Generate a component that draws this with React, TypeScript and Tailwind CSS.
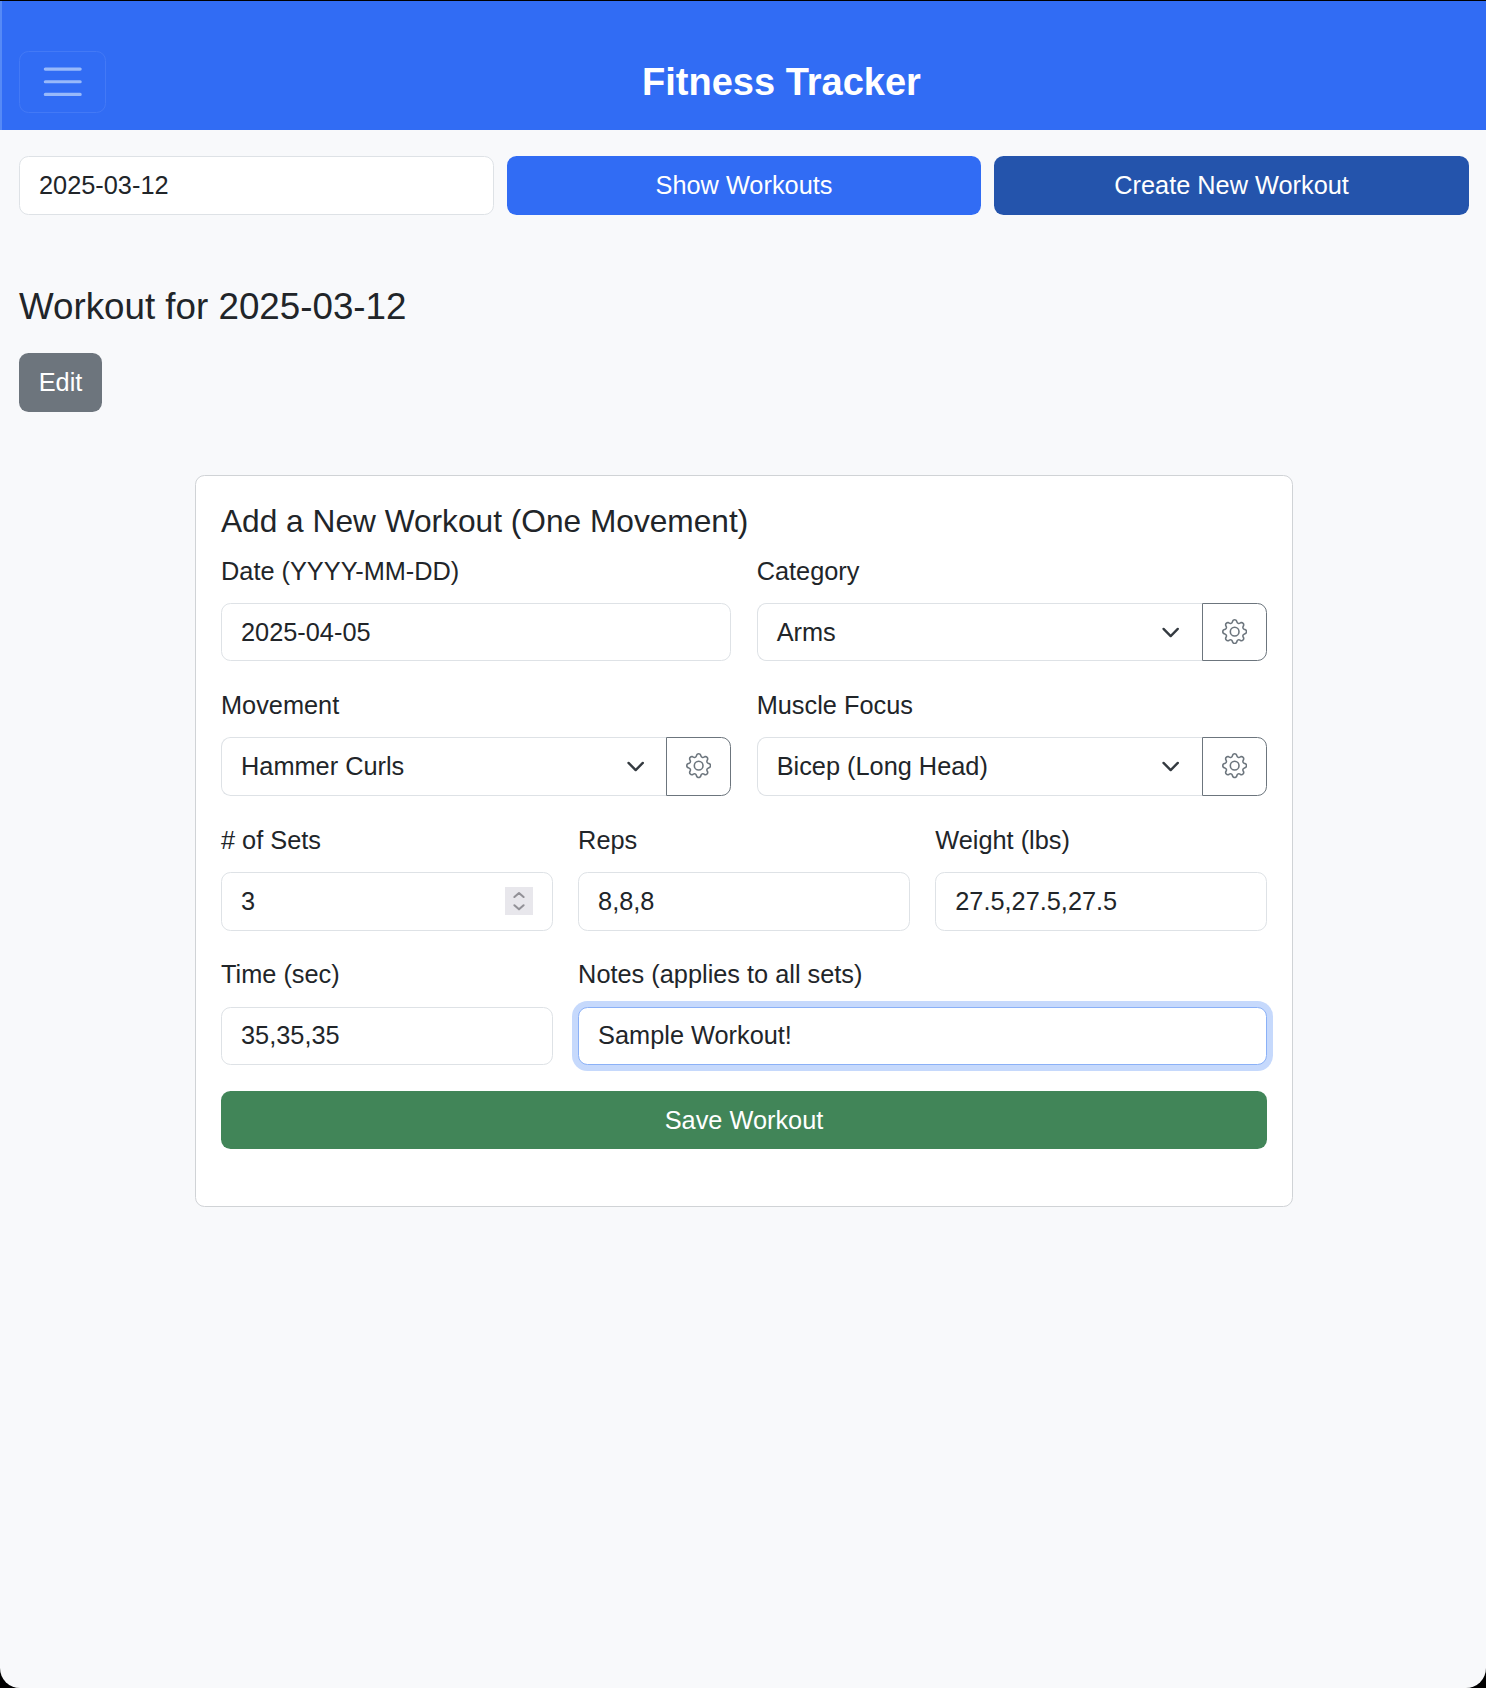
import type { ReactNode } from "react";
import { BsGear } from "react-icons/bs";

type FieldProps = { label: string; className?: string; raised?: boolean; children: ReactNode };

function Field({ label, className = "", raised = false, children }: FieldProps) {
  return (
    <div className={`min-w-0 ${className}`}>
      <label
        className={
          raised
            ? "mb-[13.37px] block h-[37.3px] leading-[37.3px]"
            : "mb-[12.67px] block h-[38px] leading-[38px]"
        }
      >
        {label}
      </label>
      {children}
    </div>
  );
}

type TextBoxProps = { value: string; focused?: boolean; raised?: boolean };

function TextBox({ value, focused = false, raised = false }: TextBoxProps) {
  const border = focused ? "border-[#8bb1f7] shadow-[0_0_0_6px_#c6d9fc]" : "border-[#dee2e6]";
  const bottom = raised ? "pb-[1.4px]" : "pb-[0.7px]";
  return (
    <div className={`flex h-[58.67px] w-full items-center rounded-[9.5px] border bg-white px-[19px] ${border} ${bottom}`}>
      {value}
    </div>
  );
}

function NumberBox({ value }: { value: string }) {
  return (
    <div className="flex h-[58.67px] w-full items-center justify-between rounded-[9.5px] border border-[#dee2e6] bg-white px-[19px]">
      <span className="pb-[0.7px]">{value}</span>
      <span className="flex h-7 w-7 items-center justify-center bg-[#e8e7ec]">
        <svg width="28" height="28" viewBox="0 0 28 28" fill="none" stroke="#929197" strokeWidth="2.1" strokeLinecap="round" strokeLinejoin="round">
          <path d="M9.4 10 14 6 18.6 10" />
          <path d="M9.4 18.3 14 22.3 18.6 18.3" />
        </svg>
      </span>
    </div>
  );
}

function SelectBox({ value }: { value: string }) {
  return (
    <div className="flex">
      <div className="flex h-[58.67px] min-w-0 flex-1 items-center justify-between rounded-l-[9.5px] border border-r-0 border-[#dee2e6] bg-white pr-[18px] pl-[19px]">
        <span className="pb-[0.7px]">{value}</span>
        <svg className="mt-[0.5px] h-[19px] w-[25.33px]" viewBox="0 0 16 16" fill="none">
          <path d="m2 5 6 6 6-6" stroke="#343a40" strokeWidth="2" strokeLinecap="round" strokeLinejoin="round" />
        </svg>
      </div>
      <button className="flex h-[58.67px] w-[65.33px] items-center justify-center rounded-r-[9.5px] border border-[#6c757d] pb-px text-[#6c757d]">
        <BsGear className="h-[25.33px] w-[25.33px]" />
      </button>
    </div>
  );
}

export default function App() {
  return (
    <div className="h-[1688px] w-full bg-black font-['Liberation_Sans',Arial,sans-serif] text-[25.33px] leading-[38px] text-[#212529]">
      <div className="h-full overflow-hidden rounded-b-[20px] border-t border-black bg-[#f8f9fb]">
        <header className="flex h-[129px] items-start border-l-2 border-[#568af6] bg-[#316cf4] pt-[50px] pl-[17px]">
          <button className="flex h-[62px] w-[87px] items-center justify-center rounded-[9.5px] border border-[#4379f6]">
            <svg className="h-[47.5px] w-[47.5px]" viewBox="0 0 30 30">
              <path d="M4 7h22M4 15h22M4 23h22" stroke="#98b9fa" strokeWidth="2" strokeLinecap="round" />
            </svg>
          </button>
          <h1 className="flex-1 pt-[3px] pr-[29px] text-center text-[38px] leading-[57px] font-bold text-white">
            Fitness Tracker
          </h1>
        </header>

        <div className="mt-[26px] grid grid-cols-3 gap-[12.67px] pr-[17px] pl-[19px]">
          <div className="flex h-[59px] items-center rounded-[9.5px] border border-[#dee2e6] bg-white px-[19px] pb-[2px]">2025-03-12</div>
          <button className="h-[59px] rounded-[9.5px] bg-[#316cf4] pb-[2px] text-white">Show Workouts</button>
          <button className="h-[59px] rounded-[9.5px] bg-[#2454ac] pb-[2px] text-white">Create New Workout</button>
        </div>

        <section className="mt-[70px] pl-[19px]">
          <h2 className="text-[36.75px] leading-[44px]">Workout for 2025-03-12</h2>
          <button className="mt-[24px] h-[59px] w-[83px] rounded-[9.5px] bg-[#6d757d] pb-[2px] text-white">Edit</button>
        </section>

        <section className="mt-[63px] ml-[195px] h-[732px] w-[1098px] rounded-[9.5px] border border-[#d0d3d6] bg-white px-[25px] pt-[26.33px]">
          <h3 className="mb-[11.67px] text-[31.67px] leading-[38px]">Add a New Workout (One Movement)</h3>
          <div className="grid grid-cols-6 gap-[25.33px]">
            <Field label="Date (YYYY-MM-DD)" className="col-span-3">
              <TextBox value="2025-04-05" />
            </Field>
            <Field label="Category" className="col-span-3">
              <SelectBox value="Arms" />
            </Field>
            <Field label="Movement" className="col-span-3" raised>
              <SelectBox value="Hammer Curls" />
            </Field>
            <Field label="Muscle Focus" className="col-span-3" raised>
              <SelectBox value="Bicep (Long Head)" />
            </Field>
            <Field label="# of Sets" className="col-span-2">
              <NumberBox value="3" />
            </Field>
            <Field label="Reps" className="col-span-2">
              <TextBox value="8,8,8" />
            </Field>
            <Field label="Weight (lbs)" className="col-span-2">
              <TextBox value="27.5,27.5,27.5" />
            </Field>
            <Field label="Time (sec)" className="col-span-2" raised>
              <TextBox value="35,35,35" raised />
            </Field>
            <Field label="Notes (applies to all sets)" className="col-span-4" raised>
              <TextBox value="Sample Workout!" focused raised />
            </Field>
            <button className="col-span-6 h-[58.67px] rounded-[9.5px] bg-[#418558] text-white">Save Workout</button>
          </div>
        </section>
      </div>
    </div>
  );
}
